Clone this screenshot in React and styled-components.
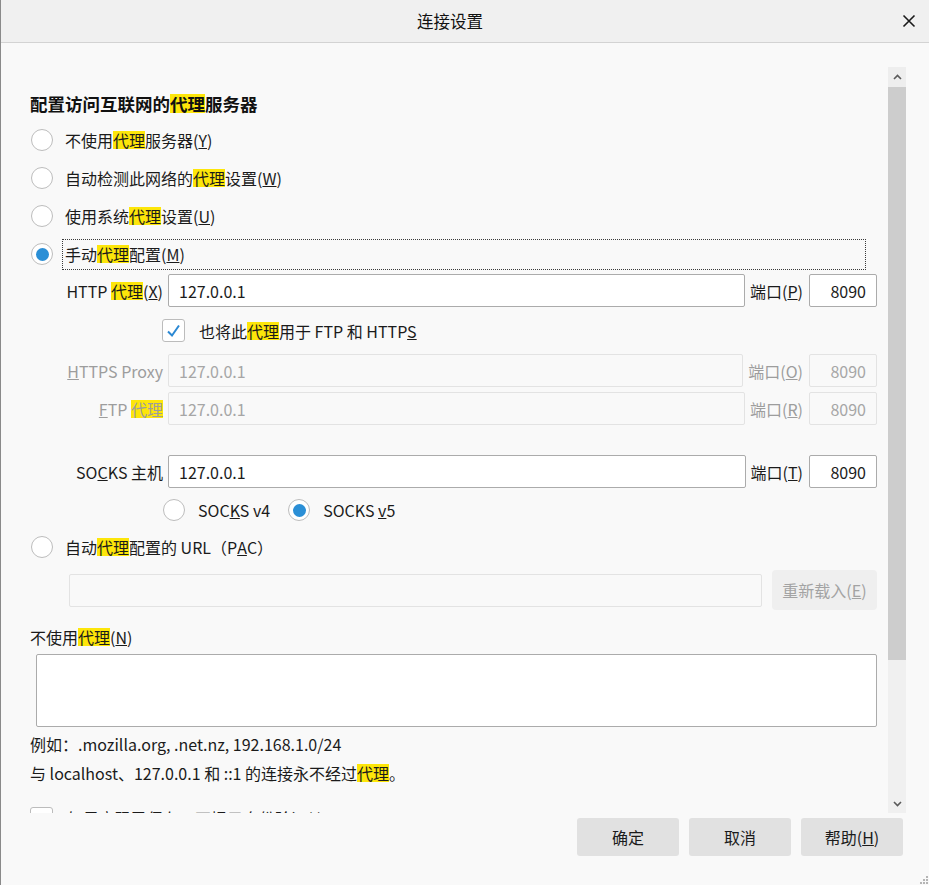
import React from 'react'
import styled, { createGlobalStyle } from 'styled-components'

const FONT = `"Noto Sans CJK SC", "Noto Sans", sans-serif`

const GlobalStyle = createGlobalStyle`
  html, body {
    margin: 0;
    padding: 0;
    background: #f9f9f9;
    font-family: ${FONT};
  }
`

const Window = styled.div`
  width: 929px;
  height: 885px;
  box-sizing: border-box;
  border-left: 1px solid #8a8a8a;
  background: #f9f9f9;
  display: flex;
  flex-direction: column;
  position: relative;
  overflow: hidden;
  color: #1b1b1b;
  font-size: 16px;
`

const TitleBar = styled.div`
  height: 42px;
  flex: none;
  background: #f0f0f0;
  border-bottom: 1px solid #d3d3d3;
  display: grid;
  grid-template-columns: 1fr auto 1fr;
  align-items: center;
`

const Title = styled.div`
  grid-column: 2;
  font-size: 16.5px;
  color: #111;
  padding-right: 30px;
`

const CloseButton = styled.div`
  grid-column: 3;
  justify-self: end;
  margin-right: 13px;
  width: 14px;
  height: 14px;
  display: flex;
`

const Main = styled.div`
  flex: none;
  height: 770px;
  padding-top: 24px;
  box-sizing: border-box;
  display: flex;
`

const Content = styled.div`
  flex: 1;
  overflow: hidden;
  padding: 24px 11px 0 29px;
  min-width: 0;
`

const Scrollbar = styled.div`
  width: 18px;
  margin-right: 23px;
  flex: none;
  display: flex;
  flex-direction: column;
`

const ScrollButton = styled.div`
  height: 20px;
  background: #eeeeee;
  display: flex;
  align-items: center;
  justify-content: center;
`

const ScrollThumb = styled.div`
  height: 573px;
  background: #cdcdcd;
`

const ScrollTrack = styled.div`
  flex: 1;
  background: #f0f0f0;
  display: flex;
  flex-direction: column;
  justify-content: flex-end;
  align-items: center;
  padding-bottom: 6px;
`

const Heading = styled.h1`
  margin: 0 0 4px;
  font-size: 17.5px;
  font-weight: bold;
  line-height: 26px;
  color: #111;
`

const Mark = styled.span`
  background: linear-gradient(transparent 13%, #fde60a 13%, #fde60a 88%, transparent 88%);
`

const ChoiceRow = styled.div`
  display: flex;
  align-items: center;
  height: ${p => p.$height || 38}px;
  padding-left: 1px;
  gap: 9px;
`

const Radio = styled.span`
  width: 22px;
  height: 22px;
  flex: none;
  box-sizing: border-box;
  border-radius: 50%;
  border: 1px solid #bdbdbd;
  background: #fff;
  display: flex;
  align-items: center;
  justify-content: center;

  &::after {
    content: "";
    width: 13px;
    height: 13px;
    border-radius: 50%;
    background: ${p => (p.$checked ? '#2b8fd6' : 'transparent')};
  }
`

const ChoiceLabel = styled.span`
  height: 31px;
  box-sizing: border-box;
  display: flex;
  align-items: center;
  padding: 0 2px;
  border: 1px dotted ${p => (p.$focused ? '#3a3a3a' : 'transparent')};
  flex: ${p => (p.$focused ? 1 : 'none')};
  margin-right: 11px;
  white-space: nowrap;
`

const ProxyRow = styled.div`
  display: flex;
  align-items: center;
  height: 33px;
  margin: ${p => p.$top || 0}px 0 0 33px;
  gap: 5px;
  color: ${p => (p.$disabled ? '#9d9d9d' : '#1b1b1b')};
`

const FieldLabel = styled.span`
  width: 100px;
  flex: none;
  text-align: right;
  white-space: nowrap;
`

const TextInput = styled.input`
  flex: ${p => (p.$port ? 'none' : 1)};
  width: ${p => (p.$port ? '68px' : 'auto')};
  min-width: 0;
  height: 33px;
  box-sizing: border-box;
  border: 1px solid ${p => (p.disabled ? '#e3e3e3' : '#ababab')};
  border-radius: 2px;
  background: ${p => (p.disabled ? '#f9f9f9' : '#ffffff')};
  color: ${p => (p.disabled ? '#a6a6a6' : '#1b1b1b')};
  font: 16px ${FONT};
  padding: 0 10px;
  text-align: ${p => (p.$port ? 'right' : 'left')};
  outline: none;
`

const PortLabel = styled.span`
  flex: none;
  white-space: nowrap;
  margin-right: 1px;
`

const CheckRow = styled.div`
  display: flex;
  align-items: center;
  height: ${p => p.$height || 47}px;
  padding-left: ${p => p.$indent || 0}px;
  margin-top: ${p => p.$top || 0}px;
  gap: 14px;
`

const Checkbox = styled.span`
  width: 23px;
  height: 23px;
  flex: none;
  box-sizing: border-box;
  border: 1px solid #bcbcbc;
  border-radius: 3px;
  background: #fff;
  display: flex;
  align-items: center;
  justify-content: center;
`

const VersionRow = styled.div`
  display: flex;
  align-items: center;
  height: 44px;
  padding-left: 133px;
`

const VersionOption = styled.span`
  display: flex;
  align-items: center;
  gap: 13px;
  margin-right: 18px;
`

const PacRow = styled.div`
  display: flex;
  align-items: center;
  height: 40px;
  margin: 8px 0 0 39px;
  gap: 10px;
`

const ReloadButton = styled.div`
  width: 105px;
  height: 40px;
  flex: none;
  border-radius: 4px;
  background: #efefef;
  color: #a3a3a3;
  display: flex;
  align-items: center;
  justify-content: center;
`

const SectionLabel = styled.div`
  margin-top: 14px;
  line-height: 26px;
`

const ExceptionBox = styled.textarea`
  display: block;
  margin: 4px 0 0 6px;
  width: calc(100% - 6px);
  height: 73px;
  box-sizing: border-box;
  border: 1px solid #ababab;
  border-radius: 2px;
  background: #fff;
  resize: none;
  font: 16px ${FONT};
  outline: none;
`

const Note = styled.div`
  line-height: 29px;
  margin-top: ${p => p.$top || 0}px;
  white-space: nowrap;
`

const Footer = styled.div`
  flex: 1;
  display: flex;
  justify-content: flex-end;
  align-items: flex-start;
  gap: 10px;
  padding: 5px 26px 0 0;
`

const DialogButton = styled.div`
  width: 102px;
  height: 38px;
  border-radius: 3px;
  background: #e1e1e1;
  display: flex;
  align-items: center;
  justify-content: center;
  color: #1b1b1b;
`

const Grip = styled.svg`
  position: absolute;
  right: 1px;
  bottom: 1px;
`

function Chevron({ up }) {
  return (
    <svg width="9" height="6" viewBox="0 0 9 6">
      <path
        d={up ? 'M1 5 L4.5 1.5 L8 5' : 'M1 1 L4.5 4.5 L8 1'}
        fill="none"
        stroke="#5a5a5a"
        strokeWidth="1.6"
      />
    </svg>
  )
}

function Proxy() {
  return <Mark>代理</Mark>
}

export default function App() {
  return (
    <>
      <GlobalStyle />
      <Window>
        <TitleBar>
          <Title>连接设置</Title>
          <CloseButton>
            <svg width="14" height="14" viewBox="0 0 14 14">
              <path d="M1.5 1.5 L12.5 12.5 M12.5 1.5 L1.5 12.5" stroke="#1a1a1a" strokeWidth="1.6" />
            </svg>
          </CloseButton>
        </TitleBar>

        <Main>
          <Content>
            <Heading>配置访问互联网的<Mark>代理</Mark>服务器</Heading>

            <ChoiceRow>
              <Radio />
              <ChoiceLabel>不使用<Proxy />服务器(<u>Y</u>)</ChoiceLabel>
            </ChoiceRow>
            <ChoiceRow>
              <Radio />
              <ChoiceLabel>自动检测此网络的<Proxy />设置(<u>W</u>)</ChoiceLabel>
            </ChoiceRow>
            <ChoiceRow>
              <Radio />
              <ChoiceLabel>使用系统<Proxy />设置(<u>U</u>)</ChoiceLabel>
            </ChoiceRow>
            <ChoiceRow>
              <Radio $checked />
              <ChoiceLabel $focused>手动<Proxy />配置(<u>M</u>)</ChoiceLabel>
            </ChoiceRow>

            <ProxyRow $top={1}>
              <FieldLabel>HTTP <Proxy />(<u>X</u>)</FieldLabel>
              <TextInput readOnly value="127.0.0.1" />
              <PortLabel>端口(<u>P</u>)</PortLabel>
              <TextInput $port readOnly value="8090" />
            </ProxyRow>

            <CheckRow $indent={132}>
              <Checkbox>
                <svg width="15" height="14" viewBox="0 0 15 14">
                  <path d="M2 7.5 L6 11.5 L13 1.5" fill="none" stroke="#2b88d3" strokeWidth="2" />
                </svg>
              </Checkbox>
              <span>也将此<Proxy />用于 FTP 和 HTTP<u>S</u></span>
            </CheckRow>

            <ProxyRow $disabled>
              <FieldLabel><u>H</u>TTPS Proxy</FieldLabel>
              <TextInput disabled value="127.0.0.1" />
              <PortLabel>端口(<u>O</u>)</PortLabel>
              <TextInput $port disabled value="8090" />
            </ProxyRow>
            <ProxyRow $disabled $top={5}>
              <FieldLabel><u>F</u>TP <Proxy /></FieldLabel>
              <TextInput disabled value="127.0.0.1" />
              <PortLabel>端口(<u>R</u>)</PortLabel>
              <TextInput $port disabled value="8090" />
            </ProxyRow>

            <ProxyRow $top={30}>
              <FieldLabel>SO<u>C</u>KS 主机</FieldLabel>
              <TextInput readOnly value="127.0.0.1" />
              <PortLabel>端口(<u>T</u>)</PortLabel>
              <TextInput $port readOnly value="8090" />
            </ProxyRow>

            <VersionRow>
              <VersionOption>
                <Radio />
                <span>SOC<u>K</u>S v4</span>
              </VersionOption>
              <VersionOption>
                <Radio $checked />
                <span>SOCKS <u>v</u>5</span>
              </VersionOption>
            </VersionRow>

            <ChoiceRow $height={30}>
              <Radio />
              <ChoiceLabel>自动<Proxy />配置的 URL（P<u>A</u>C）</ChoiceLabel>
            </ChoiceRow>

            <PacRow>
              <TextInput disabled value="" />
              <ReloadButton>重新载入(<u>E</u>)</ReloadButton>
            </PacRow>

            <SectionLabel>不使用<Proxy />(<u>N</u>)</SectionLabel>
            <ExceptionBox readOnly value="" />

            <Note $top={3}>例如：.mozilla.org, .net.nz, 192.168.1.0/24</Note>
            <Note>与 localhost、127.0.0.1 和 ::1 的连接永不经过<Proxy />。</Note>

            <CheckRow $height={30} $top={15}>
              <Checkbox />
              <span>如果密码已保存，不提示身份验证(<u>I</u>)</span>
            </CheckRow>
          </Content>

          <Scrollbar>
            <ScrollButton><Chevron up /></ScrollButton>
            <ScrollThumb />
            <ScrollTrack><Chevron /></ScrollTrack>
          </Scrollbar>
        </Main>

        <Footer>
          <DialogButton>确定</DialogButton>
          <DialogButton>取消</DialogButton>
          <DialogButton>帮助(<u>H</u>)</DialogButton>
        </Footer>

        <Grip width="9" height="9" viewBox="0 0 9 9">
          <g fill="#b5b5b5">
            <rect x="7" y="1" width="2" height="2" />
            <rect x="4" y="4" width="2" height="2" />
            <rect x="7" y="4" width="2" height="2" />
            <rect x="1" y="7" width="2" height="2" />
            <rect x="4" y="7" width="2" height="2" />
            <rect x="7" y="7" width="2" height="2" />
          </g>
        </Grip>
      </Window>
    </>
  )
}
